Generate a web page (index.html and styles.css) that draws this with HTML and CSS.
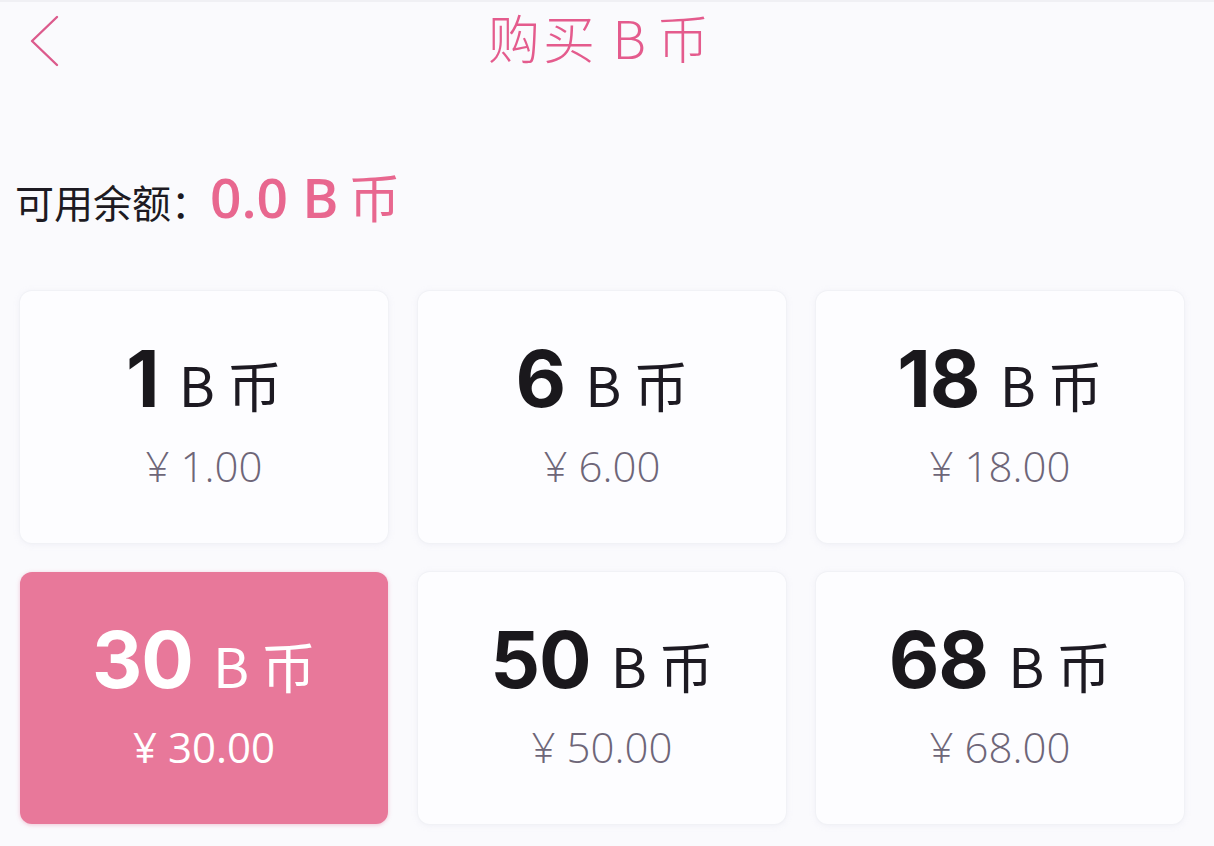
FILE: index.html
```html
<!DOCTYPE html>
<html lang="zh-CN">
<head>
  <meta charset="UTF-8">
  <title>购买B币</title>
  <link rel="stylesheet" href="styles.css">
</head>
<body>
  <div class="topbar">
    <a class="back" href="#">
      <svg width="30" height="52" viewBox="0 0 30 52">
        <polyline points="27,2 2,26 27,50" fill="none" stroke="#dc5a8c" stroke-width="2.4" stroke-linejoin="round" stroke-linecap="round"/>
      </svg>
    </a>
    <h1 class="title">购买 B<span class="sp">币</span></h1>
    <div></div>
  </div>

  <div class="balance">
    可用余额：<span class="amount">0.0 B<span class="sp">币</span></span>
  </div>

  <div class="packs">
    <div class="pack">
      <div class="coins"><b>1</b><span class="unit">B<i>币</i></span></div>
      <div class="price">¥ 1.00</div>
    </div>
    <div class="pack">
      <div class="coins"><b>6</b><span class="unit">B<i>币</i></span></div>
      <div class="price">¥ 6.00</div>
    </div>
    <div class="pack">
      <div class="coins"><b>18</b><span class="unit">B<i>币</i></span></div>
      <div class="price">¥ 18.00</div>
    </div>
    <div class="pack active">
      <div class="coins"><b>30</b><span class="unit">B<i>币</i></span></div>
      <div class="price">¥ 30.00</div>
    </div>
    <div class="pack">
      <div class="coins"><b>50</b><span class="unit">B<i>币</i></span></div>
      <div class="price">¥ 50.00</div>
    </div>
    <div class="pack">
      <div class="coins"><b>68</b><span class="unit">B<i>币</i></span></div>
      <div class="price">¥ 68.00</div>
    </div>
  </div>
</body>
</html>
```

FILE: styles.css
```css
body {
  margin: 0;
  padding: 0;
  background: #fafafd;
  font-family: "Noto Sans CJK SC", "Noto Sans", sans-serif;
  color: #1c1a20;
  height: 846px;
  overflow: hidden;
}
.topbar {
  display: grid;
  grid-template-columns: 1fr auto 1fr;
  align-items: center;
  height: 84px;
  border-top: 2px solid #f0f0f4;
}
.back {
  display: flex;
  align-items: center;
  padding-left: 30px;
  margin-top: -6px;
}
.title {
  margin: 0;
  font-size: 52px;
  font-weight: 300;
  color: #e45b8d;
  letter-spacing: 3px;
  line-height: 1;
  padding-bottom: 14px;
  margin-left: -14px;
}
.sp {
  margin-left: 8px;
}
.balance {
  margin: 88px 0 0 15px;
  font-size: 39px;
  line-height: 44px;
  color: #1d1a22;
}
.amount {
  font-family: "Open Sans", "Noto Sans CJK SC", sans-serif;
  font-size: 55px;
  font-weight: 600;
  color: #e8678f;
}
.amount .sp {
  font-family: "Noto Sans CJK SC", sans-serif;
  font-weight: 400;
  font-size: 52px;
  margin-left: 10px;
}
.packs {
  display: grid;
  grid-template-columns: repeat(3, 368px);
  grid-auto-rows: 252px;
  gap: 29px 30px;
  margin: 68px 0 0 20px;
}
.pack {
  display: flex;
  flex-direction: column;
  align-items: center;
  justify-content: center;
  gap: 18px;
  background: #fdfdff;
  border-radius: 12px;
  box-shadow: 0 0 0 1px #f1f2f6, 0 1px 6px rgba(200, 200, 220, 0.25);
  padding-bottom: 4px;
  box-sizing: border-box;
}
.coins {
  display: flex;
  align-items: baseline;
  line-height: 80px;
}
.coins b {
  font-family: Inter, "Liberation Sans", sans-serif;
  font-weight: 700;
  font-size: 78px;
  letter-spacing: -1px;
  color: #1a181c;
}
.unit {
  margin-left: 20px;
  font-size: 55px;
  font-weight: 400;
  color: #1d1a22;
}
.unit i {
  font-style: normal;
  margin-left: 12px;
}
.price {
  font-family: "Open Sans", "Noto Sans CJK SC", sans-serif;
  font-size: 42px;
  font-weight: 300;
  line-height: 50px;
  color: #6e6678;
}
.pack.active {
  background: #e8789a;
  box-shadow: 0 1px 4px rgba(220, 100, 140, 0.35);
}
.pack.active .coins b,
.pack.active .unit,
.pack.active .price {
  color: #fff;
}
.pack.active .price {
  font-weight: 400;
}
```
